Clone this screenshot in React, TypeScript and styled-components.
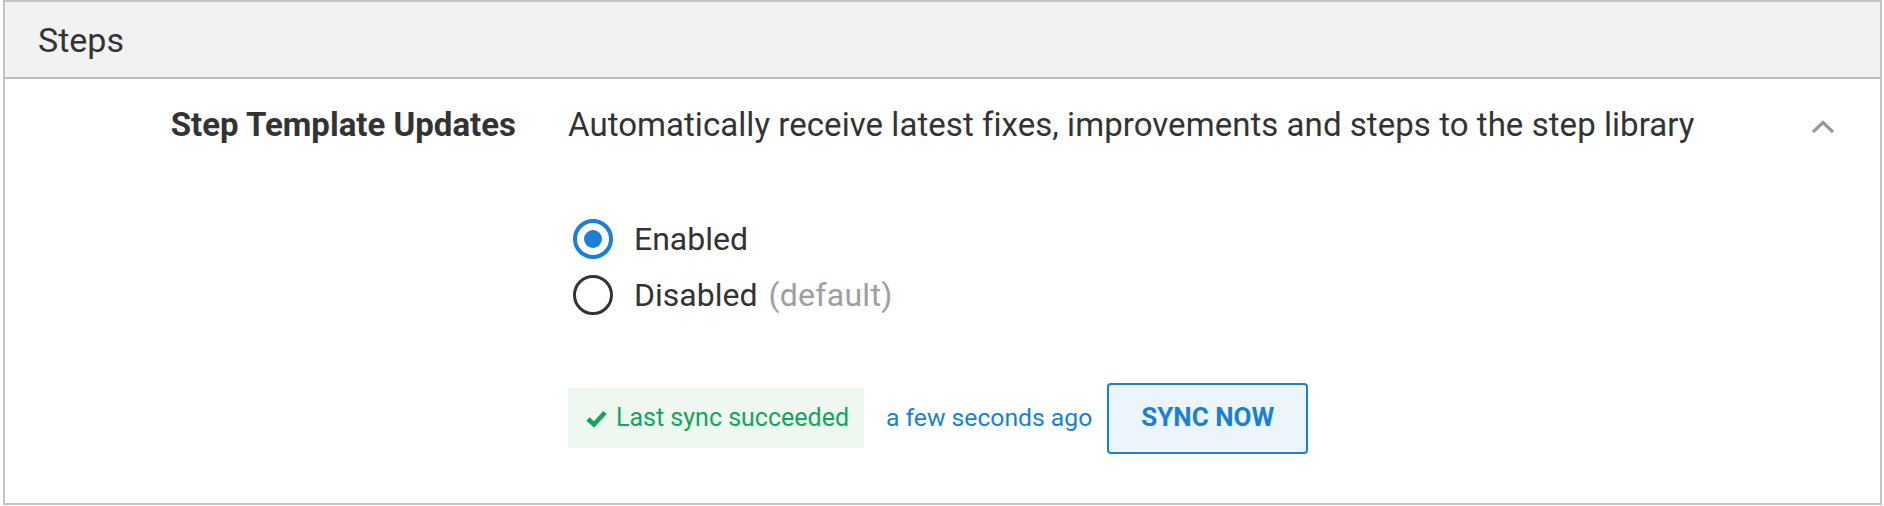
import React from "react";
import styled, { createGlobalStyle } from "styled-components";

const GlobalStyle = createGlobalStyle`
  html, body {
    margin: 0;
    padding: 0;
    background: #ffffff;
  }
  body {
    font-family: Roboto, "Liberation Sans", Arial, sans-serif;
    color: #333333;
  }
  * { box-sizing: border-box; }
`;

const Panel = styled.section`
  margin-left: 3px;
  width: 1879px;
  height: 505px;
  border: 2px solid #c4c4c4;
  display: flex;
  flex-direction: column;
  background: #ffffff;
`;

const Header = styled.header`
  background: #f2f2f2;
  border-bottom: 2px solid #bdbdbd;
  padding: 18px 0 17px 33px;
  font-size: 34px;
  line-height: 40px;
  color: #333333;
`;

const Body = styled.div`
  display: grid;
  grid-template-columns: 511px 1fr;
  column-gap: 52px;
  padding-top: 27px;
`;

const Label = styled.div`
  text-align: right;
  font-weight: 700;
  font-size: 33px;
  line-height: 38px;
  color: #333333;
`;

const Content = styled.div`
  display: flex;
  flex-direction: column;
`;

const DescriptionRow = styled.div`
  display: flex;
  align-items: center;
`;

const Description = styled.div`
  font-size: 33px;
  line-height: 38px;
  color: #333333;
  letter-spacing: 0.05px;
`;

const Chevron = styled.svg`
  margin-left: auto;
  margin-right: 45px;
  margin-top: 4px;
`;

const RadioGroup = styled.div`
  display: flex;
  flex-direction: column;
  margin-top: 67px;
`;

const RadioRow = styled.label`
  display: flex;
  align-items: center;
  height: 56px;
  gap: 21px;
  cursor: pointer;
`;

const RadioCircle = styled.span<{ $checked?: boolean }>`
  width: 40px;
  height: 40px;
  margin-left: 5px;
  border-radius: 50%;
  border: ${(p) => (p.$checked ? "4px solid #1a7fd6" : "3.5px solid #333333")};
  display: flex;
  align-items: center;
  justify-content: center;
  flex-shrink: 0;
`;

const RadioDot = styled.span`
  width: 18px;
  height: 18px;
  border-radius: 50%;
  background: #1a7fd6;
`;

const RadioText = styled.span`
  font-size: 32px;
  line-height: 38px;
  color: #333333;
  word-spacing: 3px;
`;

const Muted = styled.span`
  color: #9e9e9e;
  letter-spacing: 0.3px;
`;

const SyncRow = styled.div`
  display: flex;
  align-items: baseline;
  margin-top: 60px;
`;

const StatusBadge = styled.div`
  display: flex;
  align-items: baseline;
  gap: 9px;
  background: #eef8f1;
  color: #14a55a;
  font-size: 25px;
  line-height: 30px;
  padding: 15px 15px 15px 18px;
`;

const CheckIcon = styled.svg`
  align-self: center;
`;

const TimeAgo = styled.span`
  color: #1a7fd6;
  font-size: 24.7px;
  line-height: 30px;
  margin-left: 22px;
  margin-right: 15px;
`;

const SyncButton = styled.button`
  font-family: Roboto, "Liberation Sans", Arial, sans-serif;
  font-weight: 700;
  font-size: 26px;
  line-height: 31px;
  color: #1a7fd6;
  background: #edf5fc;
  border: 2px solid #1a7fd6;
  border-radius: 4px;
  padding: 17px 32px 19px;
  white-space: nowrap;
  cursor: pointer;
`;

export default function App() {
  return (
    <>
      <GlobalStyle />
      <Panel>
        <Header>Steps</Header>
        <Body>
          <Label>Step Template Updates</Label>
          <Content>
            <DescriptionRow>
              <Description>
                Automatically receive latest fixes, improvements and steps to the step library
              </Description>
              <Chevron width="24" height="14" viewBox="0 0 24 14" aria-hidden="true">
                <polyline
                  points="2,12 12,2.5 22,12"
                  fill="none"
                  stroke="#9a9a9a"
                  strokeWidth="3.2"
                />
              </Chevron>
            </DescriptionRow>
            <RadioGroup>
              <RadioRow>
                <RadioCircle $checked>
                  <RadioDot />
                </RadioCircle>
                <RadioText>Enabled</RadioText>
              </RadioRow>
              <RadioRow>
                <RadioCircle />
                <RadioText>
                  Disabled <Muted>(default)</Muted>
                </RadioText>
              </RadioRow>
            </RadioGroup>
            <SyncRow>
              <StatusBadge>
                <CheckIcon width="21" height="17" viewBox="0 0 21 17" aria-hidden="true">
                  <polyline
                    points="2,9 8,14.5 19,2.5"
                    fill="none"
                    stroke="#14a55a"
                    strokeWidth="4.6"
                  />
                </CheckIcon>
                <span>Last sync succeeded</span>
              </StatusBadge>
              <TimeAgo>a few seconds ago</TimeAgo>
              <SyncButton>SYNC NOW</SyncButton>
            </SyncRow>
          </Content>
        </Body>
      </Panel>
    </>
  );
}
